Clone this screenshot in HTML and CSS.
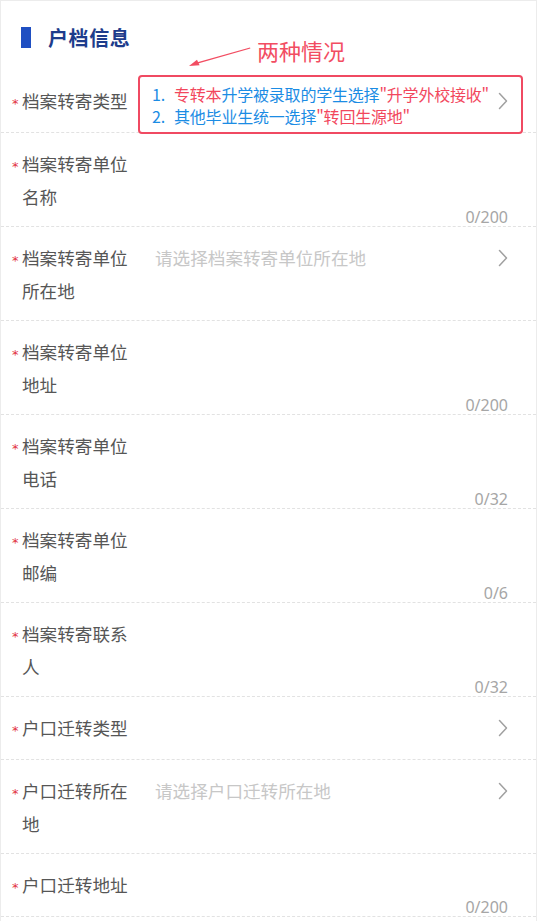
FILE: index.html
```html
<!DOCTYPE html>
<html lang="zh-CN">
<head>
<meta charset="utf-8">
<title>户档信息</title>
<link rel="stylesheet" href="styles.css">
</head>
<body>
<div class="card">
  <div class="title">
    <span class="bar"></span>
    <span class="title-text">户档信息</span>
  </div>

  <div class="row">
    <div class="label"><span class="star">*</span><span class="text">档案转寄类型</span></div>
    <div class="value"><div class="line"><span class="ph"></span><svg class="chev" viewBox="0 0 10 18"><polyline points="1.5,1.5 8.5,9 1.5,16.5"/></svg></div></div>
  </div>

  <div class="row">
    <div class="label"><span class="star">*</span><span class="text">档案转寄单位名称</span></div>
    <div class="value end"><span class="count">0/200</span></div>
  </div>

  <div class="row">
    <div class="label"><span class="star">*</span><span class="text">档案转寄单位所在地</span></div>
    <div class="value"><div class="line"><span class="ph">请选择档案转寄单位所在地</span><svg class="chev" viewBox="0 0 10 18"><polyline points="1.5,1.5 8.5,9 1.5,16.5"/></svg></div></div>
  </div>

  <div class="row">
    <div class="label"><span class="star">*</span><span class="text">档案转寄单位地址</span></div>
    <div class="value end"><span class="count">0/200</span></div>
  </div>

  <div class="row">
    <div class="label"><span class="star">*</span><span class="text">档案转寄单位电话</span></div>
    <div class="value end"><span class="count">0/32</span></div>
  </div>

  <div class="row">
    <div class="label"><span class="star">*</span><span class="text">档案转寄单位邮编</span></div>
    <div class="value end"><span class="count">0/6</span></div>
  </div>

  <div class="row">
    <div class="label"><span class="star">*</span><span class="text">档案转寄联系人</span></div>
    <div class="value end"><span class="count">0/32</span></div>
  </div>

  <div class="row">
    <div class="label"><span class="star">*</span><span class="text">户口迁转类型</span></div>
    <div class="value"><div class="line"><span class="ph"></span><svg class="chev" viewBox="0 0 10 18"><polyline points="1.5,1.5 8.5,9 1.5,16.5"/></svg></div></div>
  </div>

  <div class="row">
    <div class="label"><span class="star">*</span><span class="text">户口迁转所在地</span></div>
    <div class="value"><div class="line"><span class="ph">请选择户口迁转所在地</span><svg class="chev" viewBox="0 0 10 18"><polyline points="1.5,1.5 8.5,9 1.5,16.5"/></svg></div></div>
  </div>

  <div class="row">
    <div class="label"><span class="star">*</span><span class="text">户口迁转地址</span></div>
    <div class="value end"><span class="count">0/200</span></div>
  </div>

  <div class="note-title">两种情况</div>
  <svg class="note-arrow" viewBox="0 0 70 26">
    <polygon points="64,3.4 64.4,4.4 12,19.6 11.4,18.2" />
    <polygon points="3,22 11,15.8 13.6,21.2" />
  </svg>
  <div class="note-box">
    <div class="note-line"><span class="num">1.</span><span class="red">专转本</span>升学被录取的学生选择<span class="red">"升学外校接收"</span></div>
    <div class="note-line"><span class="num">2.</span>其他毕业生统一选择<span class="red">"转回生源地"</span></div>
  </div>
</div>
</body>
</html>
```

FILE: styles.css
```css
html, body {
  margin: 0;
  padding: 0;
  background: #ffffff;
}

body {
  font-family: "Noto Sans CJK SC", "Noto Sans", sans-serif;
}

.card {
  position: relative;
  border-left: 1px solid #ececec;
  border-right: 1px solid #ececec;
  border-top: 1px solid #ececec;
  min-height: 921px;
  box-sizing: border-box;
}

.title {
  display: flex;
  align-items: center;
  height: 69px;
  padding: 4px 0 0 20px;
  box-sizing: border-box;
}

.bar {
  width: 10px;
  height: 21px;
  background: #1f4fc2;
  margin-right: 17px;
}

.title-text {
  font-size: 20px;
  font-weight: 700;
  color: #1d3c8c;
  line-height: 28px;
  letter-spacing: 0.6px;
}

.row {
  display: flex;
  align-items: stretch;
  min-height: 63px;
  box-sizing: border-box;
  padding: 14px 28px 13px 11px;
  border-bottom: 1px dashed #e2e2e2;
}

.label {
  display: flex;
  align-items: flex-start;
  flex-shrink: 0;
  width: 117px;
  margin-right: 26px;
}

.star {
  width: 10px;
  height: 33px;
  box-sizing: border-box;
  padding-top: 3px;
  flex-shrink: 0;
  color: #e2333f;
  font-family: "DejaVu Sans", sans-serif;
  font-size: 13px;
  line-height: 33px;
}

.text {
  width: 107px;
  font-size: 17.6px;
  line-height: 33px;
  color: #565656;
}

.value {
  flex: 1;
  display: flex;
  flex-direction: column;
  justify-content: space-between;
}

.value.end {
  justify-content: flex-end;
}

.line {
  display: flex;
  align-items: center;
  justify-content: space-between;
  height: 33px;
}

.ph {
  font-size: 17.6px;
  color: #c7c7c7;
}

.chev {
  width: 10px;
  height: 18px;
  fill: none;
  stroke: #a0a0a0;
  stroke-width: 1.5;
  stroke-linecap: round;
  stroke-linejoin: round;
}

.count {
  align-self: flex-end;
  font-family: "Noto Sans", sans-serif;
  font-size: 16px;
  line-height: 20px;
  color: #a6a6a6;
  margin-bottom: -14px;
}

.note-title {
  position: absolute;
  left: 256px;
  top: 35px;
  font-size: 22px;
  line-height: 28px;
  color: #f24d62;
}

.note-arrow {
  position: absolute;
  left: 185px;
  top: 43px;
  width: 70px;
  height: 26px;
  fill: #f24d62;
}

.note-box {
  position: absolute;
  left: 137px;
  top: 74px;
  width: 385px;
  height: 59px;
  box-sizing: border-box;
  border: 2px solid #f04a62;
  border-radius: 4px;
  padding: 6px 0 0 12px;
  font-size: 16px;
  line-height: 22px;
  letter-spacing: -0.2px;
  color: #1b8ce4;
  white-space: nowrap;
}

.num {
  display: inline-block;
  width: 22px;
}

.red {
  color: #f2475d;
}
```
